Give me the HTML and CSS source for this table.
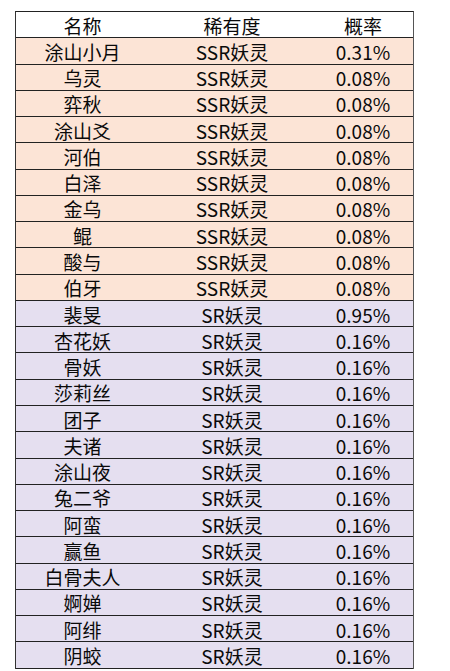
FILE: index.html
```html
<!DOCTYPE html>
<html lang="zh">
<head>
<meta charset="utf-8">
<link rel="stylesheet" href="styles.css">
</head>
<body>
<div class="table">
  <div class="row head"><span>名称</span><span>稀有度</span><span>概率</span></div>
  <div class="row ssr"><span>涂山小月</span><span>SSR妖灵</span><span>0.31%</span></div>
  <div class="row ssr"><span>乌灵</span><span>SSR妖灵</span><span>0.08%</span></div>
  <div class="row ssr"><span>弈秋</span><span>SSR妖灵</span><span>0.08%</span></div>
  <div class="row ssr"><span>涂山爻</span><span>SSR妖灵</span><span>0.08%</span></div>
  <div class="row ssr"><span>河伯</span><span>SSR妖灵</span><span>0.08%</span></div>
  <div class="row ssr"><span>白泽</span><span>SSR妖灵</span><span>0.08%</span></div>
  <div class="row ssr"><span>金乌</span><span>SSR妖灵</span><span>0.08%</span></div>
  <div class="row ssr"><span>鲲</span><span>SSR妖灵</span><span>0.08%</span></div>
  <div class="row ssr"><span>酸与</span><span>SSR妖灵</span><span>0.08%</span></div>
  <div class="row ssr"><span>伯牙</span><span>SSR妖灵</span><span>0.08%</span></div>
  <div class="row sr"><span>裴旻</span><span>SR妖灵</span><span>0.95%</span></div>
  <div class="row sr"><span>杏花妖</span><span>SR妖灵</span><span>0.16%</span></div>
  <div class="row sr"><span>骨妖</span><span>SR妖灵</span><span>0.16%</span></div>
  <div class="row sr"><span>莎莉丝</span><span>SR妖灵</span><span>0.16%</span></div>
  <div class="row sr"><span>团子</span><span>SR妖灵</span><span>0.16%</span></div>
  <div class="row sr"><span>夫诸</span><span>SR妖灵</span><span>0.16%</span></div>
  <div class="row sr"><span>涂山夜</span><span>SR妖灵</span><span>0.16%</span></div>
  <div class="row sr"><span>兔二爷</span><span>SR妖灵</span><span>0.16%</span></div>
  <div class="row sr"><span>阿蛮</span><span>SR妖灵</span><span>0.16%</span></div>
  <div class="row sr"><span>赢鱼</span><span>SR妖灵</span><span>0.16%</span></div>
  <div class="row sr"><span>白骨夫人</span><span>SR妖灵</span><span>0.16%</span></div>
  <div class="row sr"><span>婀婵</span><span>SR妖灵</span><span>0.16%</span></div>
  <div class="row sr"><span>阿绯</span><span>SR妖灵</span><span>0.16%</span></div>
  <div class="row sr"><span>阴蛟</span><span>SR妖灵</span><span>0.16%</span></div>
</div>
</body>
</html>
```
FILE: styles.css
```css
html, body {
  margin: 0;
  padding: 0;
  background: #ffffff;
}
body {
  font-family: "Noto Sans CJK SC", "Noto Sans", sans-serif;
  color: #0a0a0a;
}
.table {
  margin: 11px 0 0 15px;
  width: 399px;
  box-sizing: border-box;
  border-left: 1px solid #333333;
  border-right: 1px solid #555555;
  border-top: 1.5px solid #222222;
}
.row {
  display: grid;
  grid-template-columns: 133px 166px 1fr;
  height: 26.28px;
  box-sizing: border-box;
  border-bottom: 1.5px solid #222222;
  align-items: center;
  font-size: 19px;
  line-height: 1;
}
.row span {
  text-align: center;
  padding-top: 1px;
}
.row span:last-child {
  padding-right: 2px;
}
.head { background: #ffffff; }
.ssr { background: #fce4d6; }
.sr { background: #e5dff0; }
```
